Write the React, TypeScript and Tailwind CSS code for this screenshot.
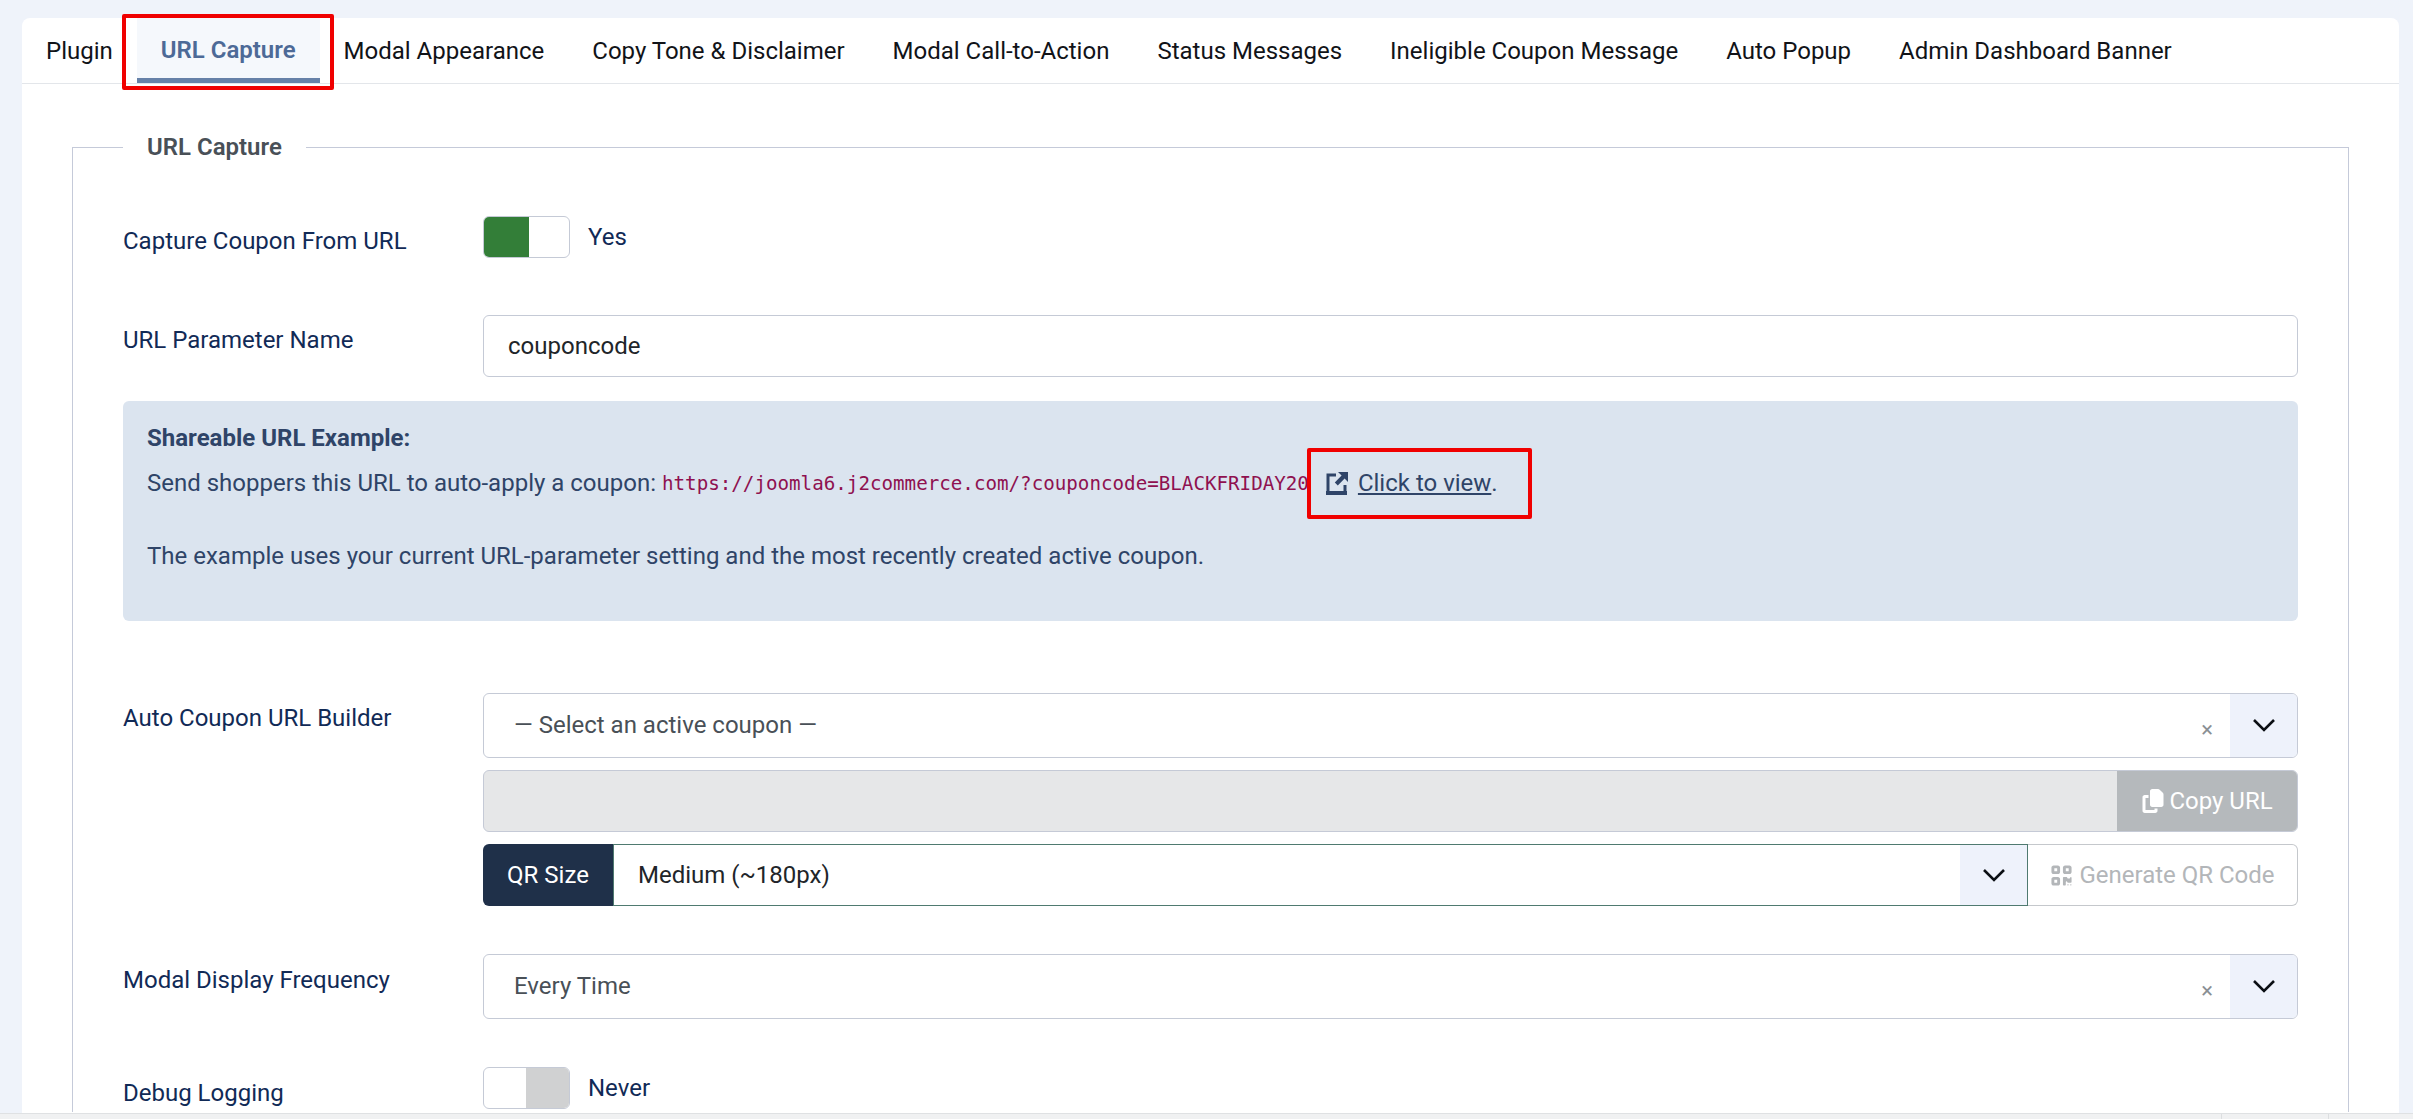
import { FaCopy, FaQrcode } from "react-icons/fa6";

const tabs = [
  "Plugin",
  "URL Capture",
  "Modal Appearance",
  "Copy Tone & Disclaimer",
  "Modal Call-to-Action",
  "Status Messages",
  "Ineligible Coupon Message",
  "Auto Popup",
  "Admin Dashboard Banner",
];

function Chevron() {
  return (
    <svg width="24" height="14" viewBox="0 0 24 14" fill="none" stroke="#0b0f14" strokeWidth="2.6">
      <path d="M2 2l10 10L22 2" />
    </svg>
  );
}

function LinkIcon() {
  return (
    <svg width="22" height="24" viewBox="0 0 22 24" className="mr-[10px]" fill="currentColor">
      <path d="M10 4H2v18h17v-8" fill="none" stroke="currentColor" strokeWidth="3" />
      <path d="M0 20h21v4H0z" />
      <path d="M12 1h10v10l-3.4-3.4-6.8 6.8-3-3 6.8-6.8z" />
    </svg>
  );
}

function Toggle({ on }: { on: boolean }) {
  return (
    <div className="flex h-[42px] w-[87px] overflow-hidden rounded-[6px] border border-[#c5cad6] bg-white">
      {on ? <div className="w-[45px] bg-[#337e38]" /> : <div className="w-[42px]" />}
      {!on && <div className="flex-1 bg-[#d0d1d2]" />}
    </div>
  );
}

function FancySelect({ value }: { value: string }) {
  return (
    <div className="flex h-[65px] items-stretch overflow-hidden rounded-[6px] border border-[#c5cad6] bg-white">
      <div className="flex flex-1 items-center pb-[2px] pl-[30px] text-[#495057]">{value}</div>
      <div className="flex w-[46px] items-center justify-center pt-[8px] text-[22px] text-[#8a8f94]">×</div>
      <div className="flex w-[67px] items-center justify-center bg-[#eef2fb] pb-[2px]">
        <Chevron />
      </div>
    </div>
  );
}

function Marker({ show }: { show: boolean }) {
  if (!show) return null;
  return <span className="absolute -bottom-[12px] -left-[15px] -right-[14px] -top-[4px] rounded-[2px] border-[4px] border-[#f00000]" />;
}

export default function App() {
  return (
    <div className="flex h-[1119px] flex-col overflow-hidden bg-[#eff3fa] font-['Roboto',sans-serif] text-[24px] text-[#112a56]">
      <div className="ml-[22px] mr-[14px] mt-[18px] min-h-0 flex-1 rounded-t-[8px] bg-white">
        <div className="flex h-[66px] border-b border-[#e3e6ea]">
          {tabs.map((tab) => (
            <div
              key={tab}
              className={
                tab === "URL Capture"
                  ? "relative flex h-[65px] items-center border-b-[5px] border-[#6681a8] bg-[#f5f8fc] px-[24px] pt-[4px] font-semibold text-[#4d6a97]"
                  : "flex h-[65px] items-center px-[24px] text-[#111318]"
              }
            >
              {tab}
              <Marker show={tab === "URL Capture"} />
            </div>
          ))}
        </div>

        <fieldset className="ml-[50px] mr-[50px] mt-[46px] h-[982px] border border-b-0 border-[#c5cad9] px-[50px]">
          <legend className="px-[24px] text-[24px] font-semibold leading-[34px] text-[#495057]">URL Capture</legend>

          <div className="mt-[52px] flex items-start">
            <div className="w-[360px] pt-[8px] leading-[34px]">Capture Coupon From URL</div>
            <Toggle on />
            <div className="ml-[18px] pt-[4px] leading-[34px]">Yes</div>
          </div>

          <div className="mt-[57px] flex items-start">
            <div className="w-[360px] pt-[8px] leading-[34px]">URL Parameter Name</div>
            <div className="flex h-[62px] flex-1 items-center rounded-[6px] border border-[#c5cad6] pl-[24px] text-[#212529]">couponcode</div>
          </div>

          <div className="mt-[24px] h-[220px] rounded-[6px] bg-[#dbe4ef] px-[24px] pt-[20px] leading-[34px] text-[#2f4468]">
            <div className="font-bold">Shareable URL Example:</div>
            <div className="mt-[9px] flex items-center">
              <span>Send shoppers this URL to auto-apply a coupon:</span>
              <code className="ml-[6px] mt-[3px] font-['DejaVu_Sans_Mono',monospace] text-[19.2px] text-[#8f1150]">https://joomla6.j2commerce.com/?couponcode=BLACKFRIDAY20</code>
              <span className="relative ml-[17px] flex items-center">
                <LinkIcon />
                <span className="underline">Click to view</span>.
                <span className="absolute -bottom-[19px] -left-[19px] -right-[34px] -top-[18px] rounded-[2px] border-[4px] border-[#f00000]" />
              </span>
            </div>
            <div className="mt-[38px]">The example uses your current URL-parameter setting and the most recently created active coupon.</div>
          </div>

          <div className="mt-[72px] flex items-start">
            <div className="w-[360px] pt-[8px] leading-[34px]">Auto Coupon URL Builder</div>
            <div className="flex flex-1 flex-col gap-[12px]">
              <FancySelect value="— Select an active coupon —" />
              <div className="flex h-[62px] overflow-hidden rounded-[6px] border border-[#c5cad6] bg-[#e6e7e8]">
                <div className="flex-1" />
                <div className="flex w-[180px] items-center justify-center gap-[4px] bg-[#b5b9bc] text-white">
                  <FaCopy size={24} />
                  Copy URL
                </div>
              </div>
              <div className="flex h-[62px]">
                <div className="flex w-[130px] items-center justify-center rounded-l-[6px] bg-[#1f3049] text-white">QR Size</div>
                <div className="flex flex-1 items-center border border-[#4f7a70] pl-[24px] text-[#212529]">
                  <div className="flex-1">Medium (~180px)</div>
                  <div className="flex h-full w-[67px] items-center justify-center bg-[#eef2fb]">
                    <Chevron />
                  </div>
                </div>
                <div className="flex w-[270px] items-center justify-center gap-[6px] rounded-r-[6px] border border-l-0 border-[#c5c8cc] text-[#b3b6b9]">
                  <FaQrcode size={23} />
                  Generate QR Code
                </div>
              </div>
            </div>
          </div>

          <div className="mt-[48px] flex items-start">
            <div className="w-[360px] pt-[9px] leading-[34px]">Modal Display Frequency</div>
            <div className="flex-1">
              <FancySelect value="Every Time" />
            </div>
          </div>

          <div className="mt-[48px] flex items-start">
            <div className="w-[360px] pt-[9px] leading-[34px]">Debug Logging</div>
            <Toggle on={false} />
            <div className="ml-[18px] pt-[4px] leading-[34px]">Never</div>
          </div>
        </fieldset>
      </div>
      <div className="flex h-[6px] justify-end border-t border-[#dfe1e3] bg-[#f0f1f2]">
        <div className="mr-[84px] w-[108px] border-x border-[#dcdee0]" />
      </div>
    </div>
  );
}
